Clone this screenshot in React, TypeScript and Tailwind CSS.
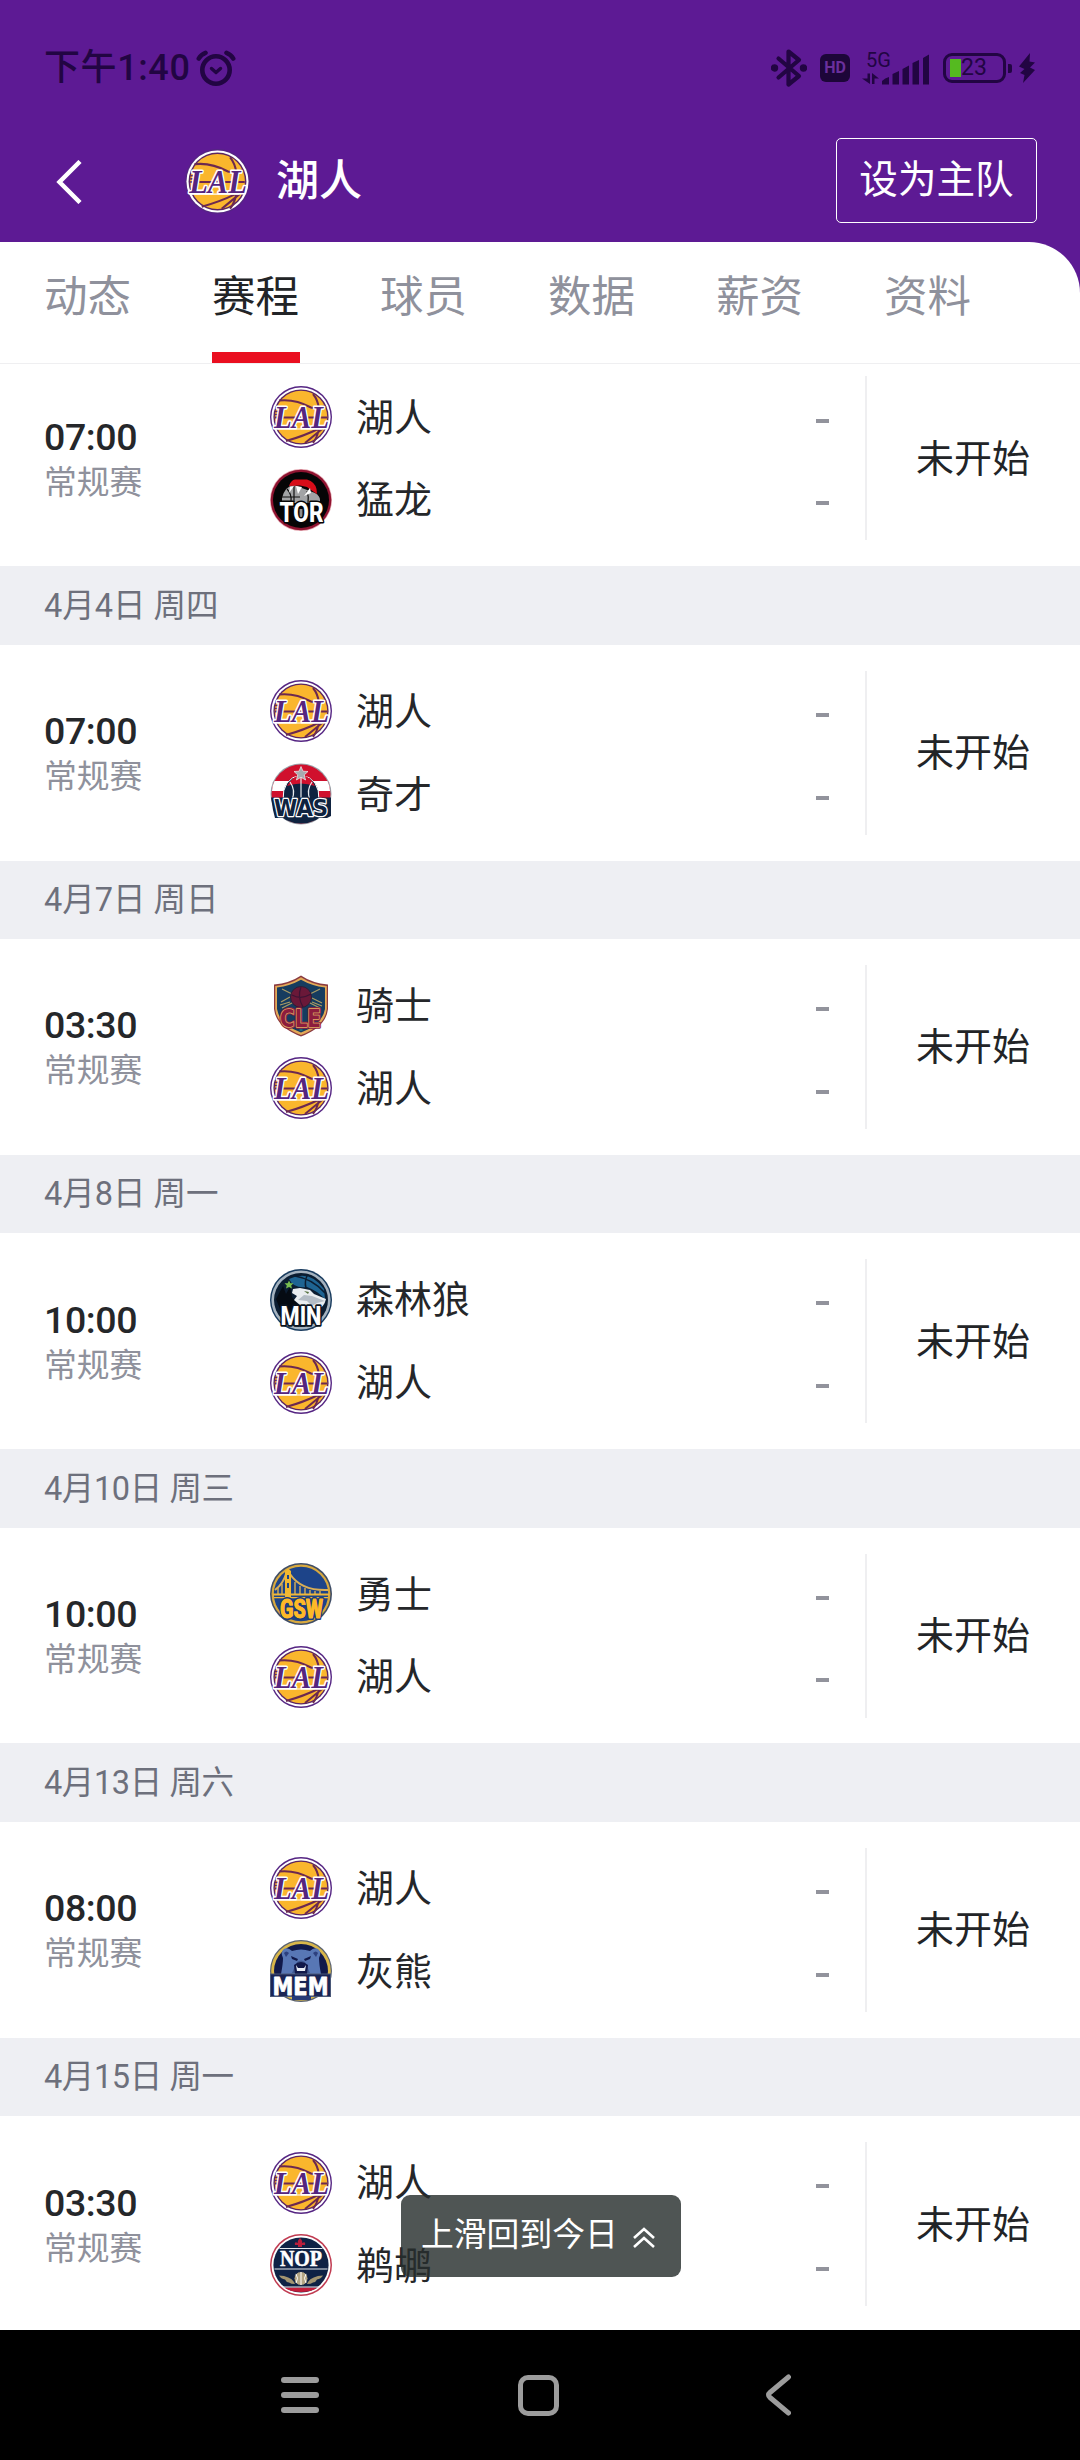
import React from 'react';

type TeamId = 'LAL' | 'TOR' | 'WAS' | 'CLE' | 'MIN' | 'GSW' | 'MEM' | 'NOP';

interface Game {
  date?: string;
  time: string;
  teams: [TeamId, TeamId];
}

const teamNames: Record<TeamId, string> = {
  LAL: '湖人',
  TOR: '猛龙',
  WAS: '奇才',
  CLE: '骑士',
  MIN: '森林狼',
  GSW: '勇士',
  MEM: '灰熊',
  NOP: '鹈鹕',
};

const games: Game[] = [
  { time: '07:00', teams: ['LAL', 'TOR'] },
  { date: '4月4日 周四', time: '07:00', teams: ['LAL', 'WAS'] },
  { date: '4月7日 周日', time: '03:30', teams: ['CLE', 'LAL'] },
  { date: '4月8日 周一', time: '10:00', teams: ['MIN', 'LAL'] },
  { date: '4月10日 周三', time: '10:00', teams: ['GSW', 'LAL'] },
  { date: '4月13日 周六', time: '08:00', teams: ['LAL', 'MEM'] },
  { date: '4月15日 周一', time: '03:30', teams: ['LAL', 'NOP'] },
];

const tabs = ['动态', '赛程', '球员', '数据', '薪资', '资料'];

interface LetterProps {
  text: string;
  x: number;
  y: number;
  width: number;
  size: number;
  fill: string;
  stroke: string;
  strokeWidth?: number;
  family?: string;
  italic?: boolean;
}

function Letters({ text, x, y, width, size, fill, stroke, strokeWidth = 2.5, family = 'Roboto, sans-serif', italic }: LetterProps) {
  return (
    <text
      x={x}
      y={y}
      textLength={width}
      lengthAdjust="spacingAndGlyphs"
      fontFamily={family}
      fontSize={size}
      fontWeight={800}
      fontStyle={italic ? 'italic' : 'normal'}
      fill={fill}
      stroke={stroke}
      strokeWidth={strokeWidth}
      paintOrder="stroke"
      strokeLinejoin="round"
    >
      {text}
    </text>
  );
}

const logos: Record<TeamId, React.ReactNode> = {
  LAL: (
    <>
      <circle cx="31" cy="31" r="31" fill="#552583" />
      <circle cx="31" cy="31" r="29.6" fill="#fff" />
      <circle cx="31" cy="31" r="27.6" fill="#5b2562" />
      <circle cx="31" cy="31" r="26.2" fill="#fab62d" />
      <g fill="none" stroke="#6c2950" strokeWidth="2">
        <path d="M9 14.500C22 13 31 16 41 21.500Q47 23.500 55 20" />
        <path d="M43 8Q48 14 49 23" />
        <path d="M5 31.500H57" />
        <path d="M6 22H13M5 25.500H12M5 28.500H11" strokeWidth="1.500" />
        <path d="M16 55Q34 50 48 43M49 42Q48 50 43 57M52 43Q46 48 35 57" />
      </g>
      <Letters text="LAL" x={4} y={41.500} width={55} size={32} fill="#55257f" stroke="#fff" strokeWidth={3} family="'Liberation Serif', serif" italic />
      <path d="M5 43H52" stroke="#fff" strokeWidth="1.200" />
    </>
  ),
  TOR: (
    <>
      <circle cx="31" cy="31" r="31" fill="#e3a4ae" />
      <circle cx="31" cy="31" r="30.300" fill="#8f1330" />
      <circle cx="31" cy="31" r="28" fill="#060506" />
      <path d="M12 29Q15 17 24 16L45 24Q50 27 50 31V34H12Z" fill="#a2a3a5" />
      <path d="M12 28H30M24 17V33M37 22Q39 28 38 34M17 20Q22 25 21 33" stroke="#111" strokeWidth="1.200" fill="none" />
      <path d="M19 17Q21 11 25 10.500H37Q45 13 46.500 20L47 25L41 21L37 18L30 16.500Z" fill="#d80d19" />
      <path d="M26 17L28 25L32 18ZM40 19L34 27L41 24ZM20 18L19 24L24 17Z" fill="#fff" />
      <path d="M24 37L29 51M31 40V51" stroke="#8b8c8e" strokeWidth="3" />
      <Letters text="TOR" x={9.500} y={53} width={44} size={28} fill="#fff" stroke="#060506" strokeWidth={3} />
    </>
  ),
  WAS: (
    <>
      <circle cx="31" cy="31" r="30.500" fill="#9aa0a8" />
      <circle cx="31" cy="31" r="29.500" fill="#d0102d" />
      <path d="M4.500 18H57.500Q60 23 60 28H2Q2 23 4.500 18Z" fill="#fff" />
      <path d="M3 38H59Q58 50 46 57Q31 64 16 57Q4 50 3 38Z" fill="#0f2340" />
      <path d="M13 38Q12 15 31 12Q50 15 49 38Z" fill="#0f2340" stroke="#fff" strokeWidth="1" />
      <path d="M17 23Q23 12 31 12.500Q40 12 45 23Q31 18 17 23Z" fill="#d0102d" />
      <path d="M31 13V38M20 19Q26 27 22 37M42 19Q36 27 40 37" fill="none" stroke="#e8ebef" strokeWidth="1.200" />
      <path d="M31 3.500L33 8.200L38 8.500L34.200 12L35.600 17L31 14.300L26.400 17L27.800 12L24 8.500L29 8.200Z" fill="#a8abb0" stroke="#fff" strokeWidth=".6" />
      <path d="M1 34.500H61V53L57 55H5L3 47Z" fill="#0f2340" />
      <Letters text="WAS" x={4} y={53} width={54} size={23} fill="#0f2340" stroke="#fff" strokeWidth={2.600} family="'DejaVu Sans', sans-serif" />
    </>
  ),
  CLE: (
    <>
      <path d="M31 .5Q42 8 58 9.500V34Q56 52 31 61.500Q6 52 4 34V9.500Q20 8 31 .5Z" fill="#8a3a40" />
      <path d="M31 2.200Q42 9.500 56.800 11V34Q55 51 31 60Q7 51 5.200 34V11Q20 9.500 31 2.200Z" fill="#e2a957" />
      <path d="M31 4.800Q42 11 55 12.500V34Q52 50 31 57.500Q10 50 7 34V12.500Q20 11 31 4.800Z" fill="#163c5f" />
      <path d="M12 14L50 33M50 14L12 33M11 27L20 22M42 23L52 28M10 30L20 27M42 27L52 31" stroke="#a99a63" strokeWidth="1.300" />
      <circle cx="31" cy="22" r="10.500" fill="#6a1838" stroke="#2b2037" strokeWidth="1" />
      <path d="M22 20Q31 25 41 19M31 12Q27 22 33 32" stroke="#3d1434" strokeWidth="1.200" fill="none" />
      <path d="M31 34V56" stroke="#1d6a7d" strokeWidth="3" />
      <Letters text="CLE" x={10} y={51.500} width={41} size={24} fill="#8d1c3d" stroke="#8d1c3d" strokeWidth={3.600} family="'DejaVu Sans', sans-serif" />
      <Letters text="CLE" x={10} y={51.500} width={41} size={24} fill="#8d1c3d" stroke="#e0ae65" strokeWidth={1.600} family="'DejaVu Sans', sans-serif" />
    </>
  ),
  MIN: (
    <>
      <circle cx="31" cy="31" r="31" fill="#173a5d" />
      <circle cx="31" cy="31" r="29.600" fill="#a4b2bf" />
      <circle cx="31" cy="31" r="27" fill="#0b1d31" />
      <path d="M19 10Q40 0 54 20L55 30Q46 21 37 18Q24 20 19 10Z" fill="#1e6492" />
      <path d="M25 7Q43 10 55 24M38 5Q34 12 36 19" stroke="#0b1d31" strokeWidth="1.500" fill="none" />
      <path d="M6 30L13 17L16 25L20 18L22 28L28 36L30 46L12 45Z" fill="#050b13" />
      <path d="M23 20L30 19L35 20L40 21L44 25L56 30Q54 39 47 40L38 38L30 36L24 31L27 27L22 24Z" fill="#e9edf0" />
      <path d="M34 26L42 27L55 32L47 34L42 37L37 32L28 31Z" fill="#b4bdc6" />
      <path d="M34 22L39 23L38 25Z" fill="#56723f" />
      <path d="M19 11.500L20.300 14.200L23.500 14.300L21.200 16.500L22 19.500L19 18L16 19.500L16.800 16.500L14.500 14.300L17.700 14.200Z" fill="#78be50" />
      <Letters text="MIN" x={10.500} y={56} width={41} size={25} fill="#fff" stroke="#0b1420" strokeWidth={3.500} />
    </>
  ),
  GSW: (
    <>
      <circle cx="31" cy="31" r="31" fill="#3f4d66" />
      <circle cx="31" cy="31" r="29.400" fill="#d8a93f" />
      <circle cx="31" cy="31" r="27.200" fill="#1d4489" />
      <g fill="none" stroke="#d9ae55" strokeWidth="1.400">
        <path d="M5 27Q13 21 16 11M20 11Q31 28 58 27" strokeWidth="2" />
        <path d="M8 25V31M12 21V31M25 19V31M30 23V31M35 25V31M40 27V31M45 28V31M50 28V31" />
      </g>
      <path d="M15 8L18 5.500L21 8V36H15Z" fill="#f2b82f" />
      <path d="M17 12H19V16H17ZM17 20H19V25H17Z" fill="#1d4489" />
      <path d="M3 30.500H59V32.500H3ZM4 34H58V35.200H4Z" fill="#f0b73a" />
      <Letters text="GSW" x={10} y={55} width={43} size={26} fill="#fdb927" stroke="#1d3c78" strokeWidth={4} />
      <Letters text="GSW" x={10} y={55} width={43} size={26} fill="#fdb927" stroke="#fdb927" strokeWidth={0.800} />
    </>
  ),
  MEM: (
    <>
      <circle cx="31" cy="31" r="31" fill="#5a6270" />
      <circle cx="31" cy="31" r="29.800" fill="#d8b64a" />
      <circle cx="31" cy="31" r="27" fill="#11194a" />
      <path d="M11 34Q13 24 13 18Q10 12 14 9Q18 7 22 11Q31 8 40 11Q44 7 48 9Q52 12 49 18Q49 24 51 34Z" fill="#5877b5" />
      <path d="M14 13Q16 10 19 13L16 17ZM48 13Q46 10 43 13L46 17Z" fill="#2d407e" />
      <path d="M21 16L28 19L27 21L22 19ZM41 16L34 19L35 21L40 19Z" fill="#11194a" />
      <path d="M27 22Q31 19 35 22L40 33H22Z" fill="#40598f" />
      <path d="M24 25Q31 19 38 25L37 34H25Z" fill="#11194a" />
      <path d="M26 25L28 28H34L36 25L35 31H27Z" fill="#e9eef5" />
      <path d="M0 33.500H61V57H0Z" fill="#4a5878" />
      <path d="M1 34.500H60V56H1Z" fill="#1a2555" />
      <path d="M22 56H41V60H22Z" fill="#263a77" />
      <Letters text="MEM" x={2.500} y={54.500} width={56} size={25} fill="#fff" stroke="#fff" strokeWidth={0.800} family="'DejaVu Sans', sans-serif" />
    </>
  ),
  NOP: (
    <>
      <circle cx="31" cy="31" r="31" fill="#c03a50" />
      <circle cx="31" cy="31" r="29.500" fill="#fff" />
      <circle cx="31" cy="31" r="27.600" fill="#0f2245" />
      <path d="M14 53.500H48Q41 58 31 58Q21 58 14 53.500Z" fill="#c21c3a" />
      <path d="M30 4Q33 7 32 9Q36 7 35 11L32 11V13H28V11L25 11Q24 7 28 9Q27 7 30 4Z" fill="#b81f3c" />
      <path d="M9.500 14.500H52.500M4.500 35H57.500M13 53H49" stroke="#e6e9ee" strokeWidth="1.200" />
      <path d="M24 48Q20 42 9 41.500Q11 45 15 45.500Q16 48 19 48.500Q21 50 25 50ZM38 48Q42 42 53 41.500Q51 45 47 45.500Q46 48 43 48.500Q41 50 37 50Z" fill="#a29470" />
      <circle cx="31" cy="44.500" r="7" fill="#b3a584" stroke="#0f2245" strokeWidth="1" />
      <path d="M31 38V51M26 40Q29 44 26 49M36 40Q33 44 36 49" stroke="#fff" strokeWidth="1" fill="none" />
      <Letters text="NOP" x={10} y={32} width={42} size={24} fill="#fff" stroke="#fff" strokeWidth={0.600} family="'Liberation Serif', serif" />
    </>
  ),
};

function TeamLogo({ id, large }: { id: TeamId; large?: boolean }) {
  return (
    <svg viewBox="0 0 62 62" className={large ? 'size-[65px] shrink-0 overflow-visible' : 'size-[62px] shrink-0 overflow-visible'}>
      {logos[id]}
    </svg>
  );
}

function StatusBar() {
  return (
    <div className="h-[120px] px-[44px] pt-[16px] flex items-center text-[#220543]">
      <span className="font-medium text-[36px] leading-none tracking-[0.6px]">下午1:40</span>
      <svg viewBox="0 0 40 36" className="ml-[6px] w-[40px] h-[36px]" fill="none" stroke="currentColor" strokeWidth="4.6" strokeLinecap="round">
        <circle cx="20" cy="20" r="13.7" />
        <path d="M15.500 18.500L20 22.500L24.500 18.500" strokeWidth="3.400" strokeLinejoin="round" />
        <path d="M2.800 8.500Q5 4.500 9.500 2.800M37.200 8.500Q35 4.500 30.500 2.800" />
      </svg>

      <div className="ml-auto flex items-center">
        <svg viewBox="0 0 36 40" className="w-[36px] h-[40px]" fill="none" stroke="currentColor" strokeWidth="4.2" strokeLinecap="round" strokeLinejoin="round">
          <path d="M7.500 10.500L28 28L17.500 36.500V3.500L28 12L7.500 29.500" />
          <circle cx="3.500" cy="20" r="1.600" fill="currentColor" />
          <circle cx="32.500" cy="20" r="1.600" fill="currentColor" />
        </svg>
        <div className="ml-[13px] w-[30px] h-[28px] rounded-[6px] bg-[#1d0639] flex items-center justify-center">
          <span className="text-[16px] leading-[20px] font-bold text-[#6a2f9c]">HD</span>
        </div>
        <svg viewBox="0 0 68 34" className="ml-[12px] w-[68px] h-[34px] overflow-visible" fill="currentColor">
          <text x="4" y="16" fontSize="20" fontFamily="Roboto, sans-serif">5G</text>
          <path d="M5.500 22.500H8V33L0 27.500H5.500ZM10 33V22L17 27.500H12.500V33Z" />
          <path d="M20 33.500V30Q23 27 27 26V33.500ZM30.500 33.500V23L37 20V33.500ZM40.500 33.500V18L47 14.500V33.500ZM50.500 33.500V12L57 9V33.500ZM61 33.500V7L67 3.500V33.500Z" />
        </svg>
        <div className="ml-[13px] w-[63px] h-[30px] rounded-[9px] border-3 border-current flex items-center pl-[4px]">
          <span className="w-[11px] h-[18px] bg-[#55ba20]" />
          <span className="text-[23px] leading-[24px]">23</span>
        </div>
        <span className="ml-[2px] w-[4px] h-[9px] rounded-r-[2px] bg-current" />
        <svg viewBox="0 0 18 30" className="ml-[6px] w-[18px] h-[30px]" fill="currentColor">
          <path d="M12 0L1 13.500L6.500 16L2 20L6.500 22L5 30L17 17L12 14.500L17 9.500L11.500 8.500Z" />
        </svg>
      </div>
    </div>
  );
}

function GameRow({ game }: { game: Game }) {
  return (
    <>
      {game.date && (
        <div className="h-[78.6px] px-[44px] pt-px bg-[#eeeff3] flex items-center text-[32.5px] text-[#6d707c]">
          <span className={game.date.length > 7 ? 'tracking-[-0.4px]' : ''}>{game.date}</span>
        </div>
      )}
      <div className="h-[215.68px] pl-[44px] flex items-center">
        <div className="w-[226px] pt-[3px]">
          <div className="text-[37.5px] leading-[46px] tracking-[-0.4px] font-medium text-[#25272a]">{game.time}</div>
          <div className="text-[32.8px] leading-[46px] text-[#8f919c]">常规赛</div>
        </div>
        <div className="w-[560px] flex flex-col gap-[20.6px]">
          {game.teams.map((id) => (
            <div key={id} className="h-[62px] flex items-center">
              <TeamLogo id={id} />
              <span className="ml-[24px] pt-px text-[38px] leading-[44px] text-[#25272a]">{teamNames[id]}</span>
              <span className="ml-auto mt-[7px] mr-[1px] w-[13px] h-[4px] bg-[#92939c]" />
            </div>
          ))}
        </div>
        <div className="ml-[35px] w-[2px] h-[164px] bg-[#efeff1]" />
        <div className="flex-1 pt-px pr-px text-center text-[38px] leading-[44px] text-[#222427]">未开始</div>
      </div>
    </>
  );
}

export default function App() {
  return (
    <div className="relative w-[1080px] h-[2460px] overflow-hidden flex flex-col bg-white [font-family:Roboto,'Noto_Sans_CJK_SC',sans-serif]">
      {/* Header */}
      <div className="bg-[#5d1a94]">
        <StatusBar />
        <div className="h-[122px] pl-[56px] pr-[43px] pb-[2px] flex items-center">
          <svg viewBox="0 0 26 44" className="mt-[3px] w-[26px] h-[44px]" fill="none" stroke="#fff" strokeWidth="4.500">
            <path d="M24 1.500L3.500 22L24 42.500" />
          </svg>
          <div className="ml-[103px] mt-[3px]">
            <TeamLogo id="LAL" large />
          </div>
          <span className="ml-[26px] mt-[2px] text-[43px] leading-[50px] font-medium text-white">湖人</span>
          <button className="ml-auto w-[201px] h-[85px] rounded-[5px] border border-white text-[38.6px] leading-none text-white">
            设为主队
          </button>
        </div>

        {/* Tabs */}
        <div className="h-[122px] rounded-tr-[51px] bg-white border-b border-[#efeff1] pl-[44px] flex gap-[80px]">
          {tabs.map((tab) => (
            <div
              key={tab}
              className={
                tab === '赛程'
                  ? 'w-[88px] h-[121px] pt-[24px] border-b-11 border-[#ea0f20] text-[43.5px] leading-[64px] text-[#222427]'
                  : 'w-[88px] h-[121px] pt-[24px] text-[43.5px] leading-[64px] text-[#8f919c]'
              }
            >
              {tab}
            </div>
          ))}
        </div>
      </div>

      {/* Schedule, scrolled so the first row sits partly under the tabs */}
      <div className="flex-1 min-h-0 overflow-hidden">
        <div className="-mt-[13.4px]">
          {games.map((game, index) => (
            <GameRow key={index} game={game} />
          ))}
        </div>
      </div>

      {/* Navigation bar */}
      <div className="h-[130px] shrink-0 bg-black flex items-center pl-[281px] text-[#9c9c9c]">
        <div className="w-[38px] flex flex-col gap-[9px]">
          <span className="h-[6px] rounded-full bg-current" />
          <span className="h-[6px] rounded-full bg-current" />
          <span className="h-[6px] rounded-full bg-current" />
        </div>
        <div className="ml-[199px] w-[41px] h-[41px] rounded-[10px] border-5 border-current" />
        <svg viewBox="0 0 26 42" className="ml-[206px] w-[26px] h-[42px]" fill="none" stroke="currentColor" strokeWidth="5" strokeLinecap="round" strokeLinejoin="round">
          <path d="M23.500 3L5 18.500Q2 21 5 23.500L23.500 39" />
        </svg>
      </div>

      {/* Back to today */}
      <div className="absolute left-[401px] top-[2195px] w-[280px] h-[82px] rounded-[9px] bg-[#262e2c]/81 flex items-center pl-[20px] text-white">
        <span className="pb-[2px] text-[32.8px] leading-[40px]">上滑回到今日</span>
        <svg viewBox="0 0 22 22" className="ml-[15px] mt-[2px] w-[22px] h-[22px]" fill="none" stroke="currentColor" strokeWidth="2.600">
          <path d="M1 12L11 3L21 12M1 21L11 12L21 21" />
        </svg>
      </div>
    </div>
  );
}
